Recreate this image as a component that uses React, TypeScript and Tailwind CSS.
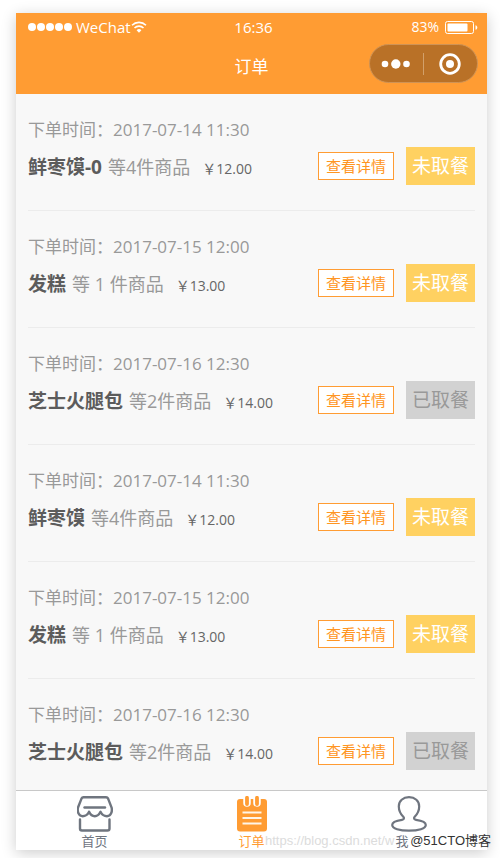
import type { ReactNode } from "react";

type Order = {
  time: string;
  name: string;
  summary: string;
  price: string;
  collected: boolean;
};

const ORDERS: Order[] = [
  { time: "2017-07-14 11:30", name: "鲜枣馍-0", summary: "等4件商品", price: "12.00", collected: false },
  { time: "2017-07-15 12:00", name: "发糕", summary: "等 1 件商品", price: "13.00", collected: false },
  { time: "2017-07-16 12:30", name: "芝士火腿包", summary: "等2件商品", price: "14.00", collected: true },
  { time: "2017-07-14 11:30", name: "鲜枣馍", summary: "等4件商品", price: "12.00", collected: false },
  { time: "2017-07-15 12:00", name: "发糕", summary: "等 1 件商品", price: "13.00", collected: false },
  { time: "2017-07-16 12:30", name: "芝士火腿包", summary: "等2件商品", price: "14.00", collected: true },
];

function WifiIcon() {
  return (
    <svg viewBox="0 0 16 12" className="h-3 w-4" fill="none" stroke="currentColor" strokeWidth="1.6" aria-hidden="true">
      <path d="M1 4.2a10 10 0 0 1 14 0" />
      <path d="M3.5 7a6.4 6.4 0 0 1 9 0" />
      <path d="M8 11.8 5.6 9.3a3.4 3.4 0 0 1 4.8 0Z" fill="currentColor" stroke="none" />
    </svg>
  );
}

function BatteryIcon() {
  return (
    <svg viewBox="0 0 34 14" className="h-3.5 w-[34px]" aria-hidden="true">
      <rect x="0.5" y="1.5" width="28" height="12" rx="2" fill="none" stroke="currentColor" />
      <rect x="2.5" y="3.5" width="20" height="8" rx="1" fill="currentColor" />
      <path d="M30.5 5.2c2.4.6 2.4 4 0 4.6Z" fill="currentColor" />
    </svg>
  );
}

function Capsule() {
  return (
    <div className="flex h-[39px] w-[109px] items-center rounded-full border border-[#cf9355] bg-[#b97127] text-white">
      <button type="button" aria-label="更多" className="flex h-full flex-1 items-center justify-center">
        <svg viewBox="0 0 30 10" className="h-2.5 w-[30px]" fill="currentColor" aria-hidden="true">
          <circle cx="4" cy="5" r="3.3" />
          <circle cx="14.8" cy="5" r="4.7" />
          <circle cx="25.5" cy="5" r="3.3" />
        </svg>
      </button>
      <span className="h-[22px] w-px bg-[#d2a06a]" />
      <button type="button" aria-label="关闭" className="flex h-full flex-1 items-center justify-center pr-px">
        <svg viewBox="0 0 22 22" className="size-[22px]" aria-hidden="true">
          <circle cx="11" cy="11" r="9.3" fill="none" stroke="currentColor" strokeWidth="2.8" />
          <circle cx="11" cy="11" r="4" fill="currentColor" />
        </svg>
      </button>
    </div>
  );
}

function StoreIcon() {
  return (
    <svg viewBox="0 0 36 36" className="size-9" fill="none" stroke="currentColor" strokeWidth="2.4" strokeLinejoin="round" strokeLinecap="round" aria-hidden="true">
      <path d="M6.5 1.2H29c1 0 1.7.5 2.1 1.4l3.5 9c1 4.4-1 8.6-4.6 8.6-3 0-5-1.5-6.5-4.5-1.5 3-3 4.5-5.7 4.5s-4.3-1.5-5.7-4.5c-1.5 3-3.5 4.5-6.5 4.5C2 20.200 0 16 1 11.600l3.500-9c.4-.9 1-1.400 2-1.400Z" />
      <path d="M7.5 11.5h20.5" />
      <path d="M3 23.5v9c0 1.3.7 2 2 2h25.5c1.3 0 2-.7 2-2v-9" />
    </svg>
  );
}

function OrderIcon() {
  return (
    <svg viewBox="0 0 36 36" className="size-9" aria-hidden="true">
      <path d="M6 3h24a3 3 0 0 1 3 3v26.5a3 3 0 0 1-3 3H6a3 3 0 0 1-3-3V6a3 3 0 0 1 3-3Z" fill="currentColor" />
      <path d="M13 0v7M23 0v7" stroke="#fff" strokeWidth="7.5" strokeLinecap="round" />
      <path d="M13 1.7v6.3M23 1.7v6.3" stroke="currentColor" strokeWidth="3.8" strokeLinecap="round" />
      <path d="M8.5 16.5h19M8.5 22h19M8.5 27.5h19" stroke="#fff5e8" strokeWidth="2" />
    </svg>
  );
}

function PersonIcon() {
  return (
    <svg viewBox="0 0 36 36" className="size-9" fill="none" stroke="currentColor" strokeWidth="2.2" strokeLinejoin="round" aria-hidden="true">
      <path d="M18 1.2c-6 0-10.200 3.800-10.200 9.200 0 4.500 1.700 7.500 4.700 10.600 1 1.200.4 2.600-1.500 2.800-5.500.7-9.800 2.200-9.800 5.300 0 3.500 7.500 5.600 16.800 5.600s16.800-2.100 16.800-5.600c0-3.100-4.300-4.600-9.800-5.300-1.900-.2-2.500-1.600-1.500-2.800 3-3.100 4.700-6.100 4.700-10.600 0-5.400-4.200-9.200-10.200-9.200Z" />
    </svg>
  );
}

function OrderRow({ order }: { order: Order }) {
  return (
    <li className="border-b border-[#ececec] pt-6 pb-[25px] last:border-transparent">
      <p className="text-[17px] leading-6 text-[#999]">下单时间：{order.time}</p>
      <div className="mt-[5px] flex items-center justify-between">
        <div className="flex items-baseline pt-1 whitespace-nowrap">
          <h2 className="text-[19px] leading-7 font-bold text-[#5c5c5c]">{order.name}</h2>
          <span className="ml-1.5 text-lg leading-7 text-[#999]">{order.summary}</span>
          <span className="ml-3 text-sm leading-7 text-[#666]">￥{order.price}</span>
        </div>
        <div className="flex items-center gap-3 whitespace-nowrap">
          <button type="button" className="h-7 border border-[#ff9c33] bg-white px-[7px] text-[15px] text-[#ff9522]">
            查看详情
          </button>
          <span
            className={`px-1.5 text-[19px] leading-[38px] ${
              order.collected ? "bg-[#d2d2d2] text-[#999]" : "bg-[#ffd161] text-white"
            }`}
          >
            {order.collected ? "已取餐" : "未取餐"}
          </span>
        </div>
      </div>
    </li>
  );
}

function Tab({ icon, label, active }: { icon: ReactNode; label: string; active?: boolean }) {
  return (
    <a
      href="#"
      aria-current={active ? "page" : undefined}
      className={`flex flex-1 flex-col items-center pt-[5px] ${active ? "text-[#ff9c33]" : "text-[#6f757f]"}`}
    >
      {icon}
      <span className="min-w-[26px] text-[13px] leading-[18px]">{label}</span>
    </a>
  );
}

export default function App() {
  return (
    <div className="bg-white pt-[13px] pr-[13px] pb-2 pl-4 font-['Open_Sans','Noto_Sans_CJK_SC',sans-serif]">
      <div className="relative bg-[#f8f8f8] shadow-[0_3px_14px_rgba(0,0,0,0.2)]">
        <header className="bg-[#ff9c33] text-white">
          <div className="grid grid-cols-3 items-center px-2 pl-3 text-[15px] leading-7">
            <div className="flex items-center">
              <span className="flex gap-px" aria-hidden="true">
                {[0, 1, 2, 3, 4].map((i) => (
                  <span key={i} className="size-2 rounded-full bg-white" />
                ))}
              </span>
              <span className="ml-1">WeChat</span>
              <WifiIcon />
            </div>
            <div className="text-center">16:36</div>
            <div className="flex items-center justify-end gap-1.5">
              <span className="text-sm leading-7">83%</span>
              <BatteryIcon />
            </div>
          </div>
          <div className="grid grid-cols-3 items-center px-[9px] pt-[3px] pb-[11px]">
            <h1 className="col-start-2 pt-1.5 text-center text-[17px]">订单</h1>
            <div className="flex justify-end">
              <Capsule />
            </div>
          </div>
        </header>

        <ul className="px-3">
          {ORDERS.map((order, i) => (
            <OrderRow key={i} order={order} />
          ))}
        </ul>

        <nav className="-mt-[6px] flex border-t border-[#c8c8c8] bg-white">
          <Tab icon={<StoreIcon />} label="首页" />
          <Tab icon={<OrderIcon />} label="订单" active />
          <Tab icon={<PersonIcon />} label="我" />
        </nav>

        {/* blog watermarks lie over the tab bar */}
        <p className="absolute right-0 bottom-0 w-[222px] font-['Liberation_Sans',sans-serif] text-[13px] leading-[18px] whitespace-nowrap text-[#dcdcdc]">
          https://blog.csdn.net/w
        </p>
        <p className="absolute -right-1 bottom-0 font-['Liberation_Sans','Noto_Sans_CJK_SC',sans-serif] text-[13px] leading-[18px] whitespace-nowrap text-[#333]">
          @51CTO博客
        </p>
      </div>
    </div>
  );
}
